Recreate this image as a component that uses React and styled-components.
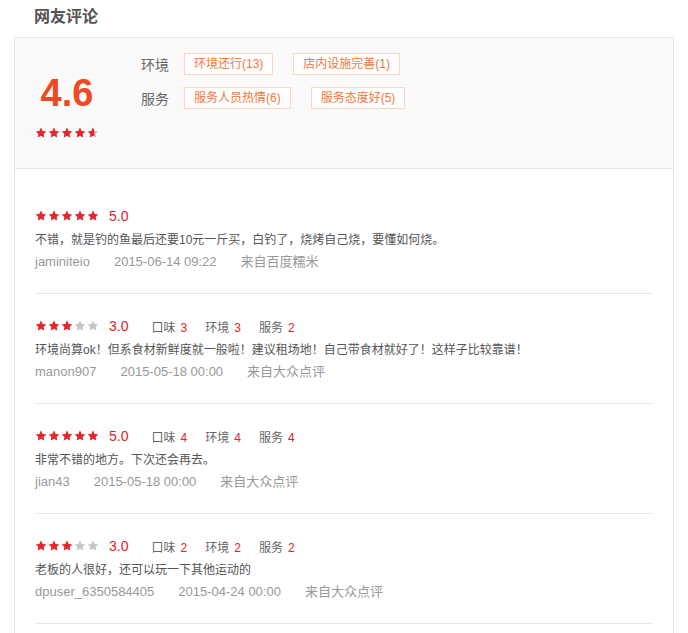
import React, { useId } from "react";
import styled, { createGlobalStyle } from "styled-components";

const GlobalStyle = createGlobalStyle`
  body {
    margin: 0;
    background: #ffffff;
    font-family: "Liberation Sans", "Noto Sans CJK SC", sans-serif;
  }
`;

const Page = styled.div`
  padding: 0 14px;
`;

const Title = styled.h2`
  margin: 0;
  height: 37px;
  line-height: 34px;
  padding-left: 20px;
  font-size: 16px;
  font-weight: 700;
  color: #555555;
`;

const Panel = styled.div`
  width: 660px;
  box-sizing: border-box;
  border: 1px solid #e6e6e6;
`;

const Summary = styled.div`
  display: flex;
  height: 130px;
  background: #fafafa;
  border-bottom: 1px solid #e6e6e6;
`;

const ScoreCol = styled.div`
  width: 104px;
  display: flex;
  flex-direction: column;
  align-items: center;
  padding-top: 36px;
`;

const BigScore = styled.div`
  font-size: 38px;
  line-height: 38px;
  font-weight: 700;
  color: #ed4a24;
  margin-bottom: 15px;
`;

const InfoCol = styled.div`
  padding: 15px 0 0 22px;
  display: flex;
  flex-direction: column;
  gap: 12px;
`;

const TagRow = styled.div`
  display: flex;
  align-items: center;
  height: 22px;
`;

const TagLabel = styled.span`
  font-size: 14px;
  color: #666666;
  margin-right: 15px;
`;

const Tag = styled.span`
  box-sizing: border-box;
  height: 22px;
  line-height: 20px;
  padding: 0 9px;
  margin-right: 20px;
  border: 1px solid #fbd6c3;
  background: #ffffff;
  color: #f1773a;
  font-size: 12px;
`;

const List = styled.div`
  padding: 15px 20px 30px;
`;

const Review = styled.div`
  padding: 19px 0 20px;
  border-bottom: 1px solid #e8e8e8;
`;

const RatingRow = styled.div`
  display: flex;
  align-items: center;
  height: 26px;
`;

const RateNum = styled.span`
  font-size: 14px;
  color: #e2232a;
  margin-left: 10px;
  margin-right: 23px;
`;

const SubScore = styled.span`
  font-size: 12px;
  color: #666666;
  margin-right: 18px;

  b {
    font-weight: 400;
    color: #e2232a;
    margin-left: 5px;
  }
`;

const Text = styled.p`
  margin: 0;
  height: 22px;
  line-height: 22px;
  font-size: 12px;
  color: #555555;
`;

const Meta = styled.div`
  display: flex;
  gap: 24px;
  height: 22px;
  line-height: 22px;
  font-size: 13px;
  color: #999999;
`;

const StarWrap = styled.span`
  display: inline-flex;
  gap: 1px;
`;

const STAR =
  "M12 1.2l3.2 6.6 7.2 1-5.2 5.1 1.25 7.2L12 17.7l-6.45 3.4 1.25-7.2L1.6 8.8l7.2-1z";

function Star({ fill }) {
  const id = useId();
  return (
    <svg width="12" height="12" viewBox="0 0 24 24">
      <defs>
        <clipPath id={id}>
          <rect x="0" y="0" width={24 * fill} height="24" />
        </clipPath>
      </defs>
      <path d={STAR} fill="#c4c4c4" />
      <path d={STAR} fill="#e8262b" clipPath={`url(#${id})`} />
    </svg>
  );
}

function Stars({ value }) {
  return (
    <StarWrap>
      {[0, 1, 2, 3, 4].map((i) => (
        <Star key={i} fill={Math.max(0, Math.min(1, value - i))} />
      ))}
    </StarWrap>
  );
}

const reviews = [
  {
    score: 5,
    text: "不错，就是钓的鱼最后还要10元一斤买，白钓了，烧烤自己烧，要懂如何烧。",
    user: "jaminiteio",
    date: "2015-06-14 09:22",
    from: "来自百度糯米"
  },
  {
    score: 3,
    subs: [3, 3, 2],
    text: "环境尚算ok！但系食材新鲜度就一般啦！建议租场地！自己带食材就好了！这样子比较靠谱！",
    user: "manon907",
    date: "2015-05-18 00:00",
    from: "来自大众点评"
  },
  {
    score: 5,
    subs: [4, 4, 4],
    text: "非常不错的地方。下次还会再去。",
    user: "jian43",
    date: "2015-05-18 00:00",
    from: "来自大众点评"
  },
  {
    score: 3,
    subs: [2, 2, 2],
    text: "老板的人很好，还可以玩一下其他运动的",
    user: "dpuser_6350584405",
    date: "2015-04-24 00:00",
    from: "来自大众点评"
  }
];

const subNames = ["口味", "环境", "服务"];

export default function App() {
  return (
    <Page>
      <GlobalStyle />
      <Title>网友评论</Title>
      <Panel>
        <Summary>
          <ScoreCol>
            <BigScore>4.6</BigScore>
            <Stars value={4.6} />
          </ScoreCol>
          <InfoCol>
            <TagRow>
              <TagLabel>环境</TagLabel>
              <Tag>环境还行(13)</Tag>
              <Tag>店内设施完善(1)</Tag>
            </TagRow>
            <TagRow>
              <TagLabel>服务</TagLabel>
              <Tag>服务人员热情(6)</Tag>
              <Tag>服务态度好(5)</Tag>
            </TagRow>
          </InfoCol>
        </Summary>
        <List>
          {reviews.map((r, i) => (
            <Review key={i}>
              <RatingRow>
                <Stars value={r.score} />
                <RateNum>{r.score.toFixed(1)}</RateNum>
                {r.subs &&
                  r.subs.map((s, j) => (
                    <SubScore key={j}>
                      {subNames[j]}
                      <b>{s}</b>
                    </SubScore>
                  ))}
              </RatingRow>
              <Text>{r.text}</Text>
              <Meta>
                <span>{r.user}</span>
                <span>{r.date}</span>
                <span>{r.from}</span>
              </Meta>
            </Review>
          ))}
        </List>
      </Panel>
    </Page>
  );
}
